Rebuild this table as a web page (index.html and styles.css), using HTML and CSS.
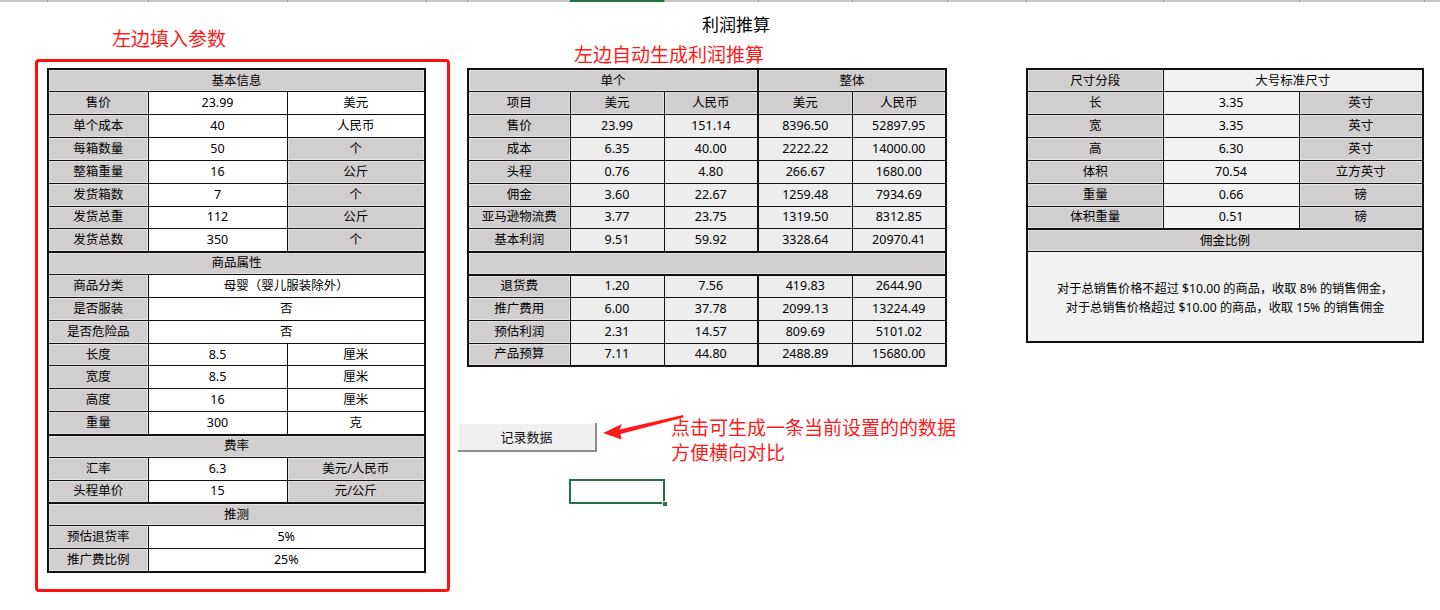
FILE: index.html
```html
<!DOCTYPE html>
<html lang="zh-CN">
<head>
<meta charset="utf-8">
<title>利润推算</title>
<link rel="stylesheet" href="styles.css">
</head>
<body>
<div class="topbar">
  <span class="seg w47"></span><span class="seg w101"></span><span class="seg w139"></span><span class="seg w139"></span><span class="seg w41"></span><span class="seg w103"></span><span class="seg active w94"></span><span class="seg w94"></span><span class="seg w94"></span><span class="seg w95"></span><span class="seg w79"></span><span class="seg w137"></span><span class="seg w136"></span><span class="seg w125"></span><span class="seg grow"></span>
</div>
<div class="sheet">
  <header class="header">
    <h1 class="title">利润推算</h1>
  </header>

  <div class="note note-left">左边填入参数</div>
  <div class="note note-mid">左边自动生成利润推算</div>
  <div class="note note-btn">点击可生成一条当前设置的的数据<br>方便横向对比</div>
  <svg class="arrow" width="100" height="40" viewBox="0 0 100 40">
    <polygon points="3,24 22,15 19.5,20.5 83,6 83.5,8.5 20.5,25 21.5,30.5" fill="#ff1a1a"/>
  </svg>

  <main class="main">
    <section class="inputs">
      <table class="grid t-left">
        <colgroup><col style="width:100px"><col style="width:139px"><col style="width:138px"></colgroup>
        <tr><td class="g" colspan="3">基本信息</td></tr>
        <tr><td class="g">售价</td><td>23.99</td><td>美元</td></tr>
        <tr><td class="g">单个成本</td><td>40</td><td>人民币</td></tr>
        <tr><td class="g">每箱数量</td><td>50</td><td class="g">个</td></tr>
        <tr><td class="g">整箱重量</td><td>16</td><td class="g">公斤</td></tr>
        <tr><td class="g">发货箱数</td><td>7</td><td class="g">个</td></tr>
        <tr><td class="g">发货总重</td><td>112</td><td class="g">公斤</td></tr>
        <tr><td class="g">发货总数</td><td>350</td><td class="g">个</td></tr>
        <tr><td class="g sec" colspan="3">商品属性</td></tr>
        <tr><td class="g">商品分类</td><td colspan="2">母婴（婴儿服装除外）</td></tr>
        <tr><td class="g">是否服装</td><td colspan="2">否</td></tr>
        <tr><td class="g">是否危险品</td><td colspan="2">否</td></tr>
        <tr><td class="g">长度</td><td>8.5</td><td>厘米</td></tr>
        <tr><td class="g">宽度</td><td>8.5</td><td>厘米</td></tr>
        <tr><td class="g">高度</td><td>16</td><td>厘米</td></tr>
        <tr><td class="g">重量</td><td>300</td><td>克</td></tr>
        <tr><td class="g sec" colspan="3">费率</td></tr>
        <tr><td class="g">汇率</td><td>6.3</td><td class="g">美元/人民币</td></tr>
        <tr><td class="g">头程单价</td><td>15</td><td class="g">元/公斤</td></tr>
        <tr><td class="g sec" colspan="3">推测</td></tr>
        <tr><td class="g">预估退货率</td><td colspan="2">5%</td></tr>
        <tr><td class="g">推广费比例</td><td colspan="2">25%</td></tr>
      </table>
    </section>

    <section class="calc">
      <table class="grid t-mid">
        <colgroup><col style="width:102px"><col style="width:94px"><col style="width:94px"><col style="width:94px"><col style="width:94px"></colgroup>
        <tr><td class="g sep" colspan="3">单个</td><td class="g" colspan="2">整体</td></tr>
        <tr><td class="g">项目</td><td class="g">美元</td><td class="g sep">人民币</td><td class="g">美元</td><td class="g">人民币</td></tr>
        <tr><td class="g">售价</td><td class="v">23.99</td><td class="v sep">151.14</td><td class="v">8396.50</td><td class="v">52897.95</td></tr>
        <tr><td class="g">成本</td><td class="v">6.35</td><td class="v sep">40.00</td><td class="v">2222.22</td><td class="v">14000.00</td></tr>
        <tr><td class="g">头程</td><td class="v">0.76</td><td class="v sep">4.80</td><td class="v">266.67</td><td class="v">1680.00</td></tr>
        <tr><td class="g">佣金</td><td class="v">3.60</td><td class="v sep">22.67</td><td class="v">1259.48</td><td class="v">7934.69</td></tr>
        <tr><td class="g">亚马逊物流费</td><td class="v">3.77</td><td class="v sep">23.75</td><td class="v">1319.50</td><td class="v">8312.85</td></tr>
        <tr><td class="g">基本利润</td><td class="v">9.51</td><td class="v sep">59.92</td><td class="v">3328.64</td><td class="v">20970.41</td></tr>
        <tr><td class="g sec secb" colspan="5"></td></tr>
        <tr><td class="g">退货费</td><td class="v">1.20</td><td class="v sep">7.56</td><td class="v">419.83</td><td class="v">2644.90</td></tr>
        <tr><td class="g">推广费用</td><td class="v">6.00</td><td class="v sep">37.78</td><td class="v">2099.13</td><td class="v">13224.49</td></tr>
        <tr><td class="g">预估利润</td><td class="v">2.31</td><td class="v sep">14.57</td><td class="v">809.69</td><td class="v">5101.02</td></tr>
        <tr><td class="g">产品预算</td><td class="v">7.11</td><td class="v sep">44.80</td><td class="v">2488.89</td><td class="v">15680.00</td></tr>
      </table>
      <button class="record" type="button">记录数据</button>
      <div class="selected"><span class="handle"></span></div>
    </section>

    <section class="size">
      <table class="grid t-right">
        <colgroup><col style="width:136px"><col style="width:136px"><col style="width:124px"></colgroup>
        <tr><td class="g">尺寸分段</td><td class="w" colspan="2">大号标准尺寸</td></tr>
        <tr><td class="g">长</td><td class="w">3.35</td><td class="g">英寸</td></tr>
        <tr><td class="g">宽</td><td class="w">3.35</td><td class="g">英寸</td></tr>
        <tr><td class="g">高</td><td class="w">6.30</td><td class="g">英寸</td></tr>
        <tr><td class="g">体积</td><td class="w">70.54</td><td class="g">立方英寸</td></tr>
        <tr><td class="g">重量</td><td class="w">0.66</td><td class="g">磅</td></tr>
        <tr><td class="g">体积重量</td><td class="w">0.51</td><td class="g">磅</td></tr>
        <tr><td class="g sec" colspan="3">佣金比例</td></tr>
        <tr><td class="w comment" colspan="3">对于总销售价格不超过 $10.00 的商品，收取 8% 的销售佣金，<br>对于总销售价格超过 $10.00 的商品，收取 15% 的销售佣金</td></tr>
      </table>
    </section>
  </main>
</div>
</body>
</html>
```

FILE: styles.css
```css
* { box-sizing: border-box; }

html, body {
  margin: 0;
  padding: 0;
  background: #ffffff;
}

body {
  width: 1440px;
  height: 610px;
  overflow: hidden;
  font-family: "Noto Sans", "Noto Sans CJK SC", sans-serif;
  color: #000;
}

.topbar {
  display: flex;
  height: 2px;
  background: #c6c6c6;
}
.seg {
  height: 2px;
  border-left: 1px solid #9a9a9a;
  background: #c6c6c6;
}
.seg.active { background: #217346; border-left-color: #217346; }
.seg.grow { flex: 1; }
.w47 { width: 47px; border-left: none; }
.w101 { width: 101px; }
.w139 { width: 139px; }
.w41 { width: 41px; }
.w103 { width: 103px; }
.w94 { width: 94px; }
.w95 { width: 95px; }
.w79 { width: 79px; }
.w137 { width: 137px; }
.w136 { width: 136px; }
.w125 { width: 125px; }

.sheet {
  position: relative;
}

.header {
  height: 57px;
}
.title {
  margin: 0 0 0 702px;
  padding-top: 11px;
  font-family: "Noto Sans CJK SC", sans-serif;
  font-weight: 400;
  font-size: 17px;
  line-height: 22px;
}

.note {
  position: absolute;
  color: #ff1a1a;
  font-family: "Noto Sans CJK SC", sans-serif;
  font-size: 19px;
  line-height: 25px;
  white-space: nowrap;
}
.note-left { left: 112px; top: 23px; }
.note-mid { left: 574px; top: 39px; }
.note-btn { left: 671px; top: 412px; }

.arrow {
  position: absolute;
  left: 600px;
  top: 407px;
}

.main {
  display: flex;
  align-items: flex-start;
  padding-left: 35px;
}

.inputs {
  border: 3px solid #ff1010;
  border-radius: 4px;
  padding: 6px 21px 16px 9px;
}

.calc {
  margin-left: 17px;
  padding-top: 9px;
  display: flex;
  flex-direction: column;
  align-items: flex-start;
}

.size {
  margin-left: 79px;
  padding-top: 9px;
}

.grid {
  border-collapse: collapse;
  table-layout: fixed;
  border: 2px solid #111;
  font-size: 12.5px;
}
.t-left { width: 377px; }
.t-mid { width: 478px; }
.t-right { width: 396px; }

.grid td {
  height: 22.85px;
  padding: 0 2px;
  border: 1px solid #111;
  text-align: center;
  vertical-align: middle;
  line-height: 16px;
  white-space: nowrap;
  background: #ffffff;
}
.grid td.g {
  background: #d0cece;
  box-shadow: inset 0 0 0 1px #e3e1e1;
}
.grid td.v { background: #ededed; }
.grid td.w { background: #f2f2f2; }
.grid td.sec { border-top: 2px solid #111; }
.grid td.secb { border-bottom: 2px solid #111; }
.grid td.sep { border-right: 2px solid #111; }
.grid td.comment {
  height: 90px;
  font-size: 12.2px;
  line-height: 19px;
  padding-top: 2px;
}

.record {
  margin: 56px 0 0 -9px;
  width: 139px;
  height: 29px;
  padding: 0;
  background: #f0f0f0;
  border: none;
  border-right: 2px solid #8c8c8c;
  border-bottom: 2px solid #8c8c8c;
  box-shadow: inset 1px 1px 0 #fdfdfd;
  font-family: "Noto Sans CJK SC", sans-serif;
  font-size: 13px;
  color: #111;
}

.selected {
  position: relative;
  margin: 27px 0 0 102px;
  width: 96px;
  height: 25px;
  border: 2px solid #217346;
}
.handle {
  position: absolute;
  right: -5px;
  bottom: -5px;
  width: 6px;
  height: 6px;
  background: #217346;
  border: 1px solid #ffffff;
}
```
